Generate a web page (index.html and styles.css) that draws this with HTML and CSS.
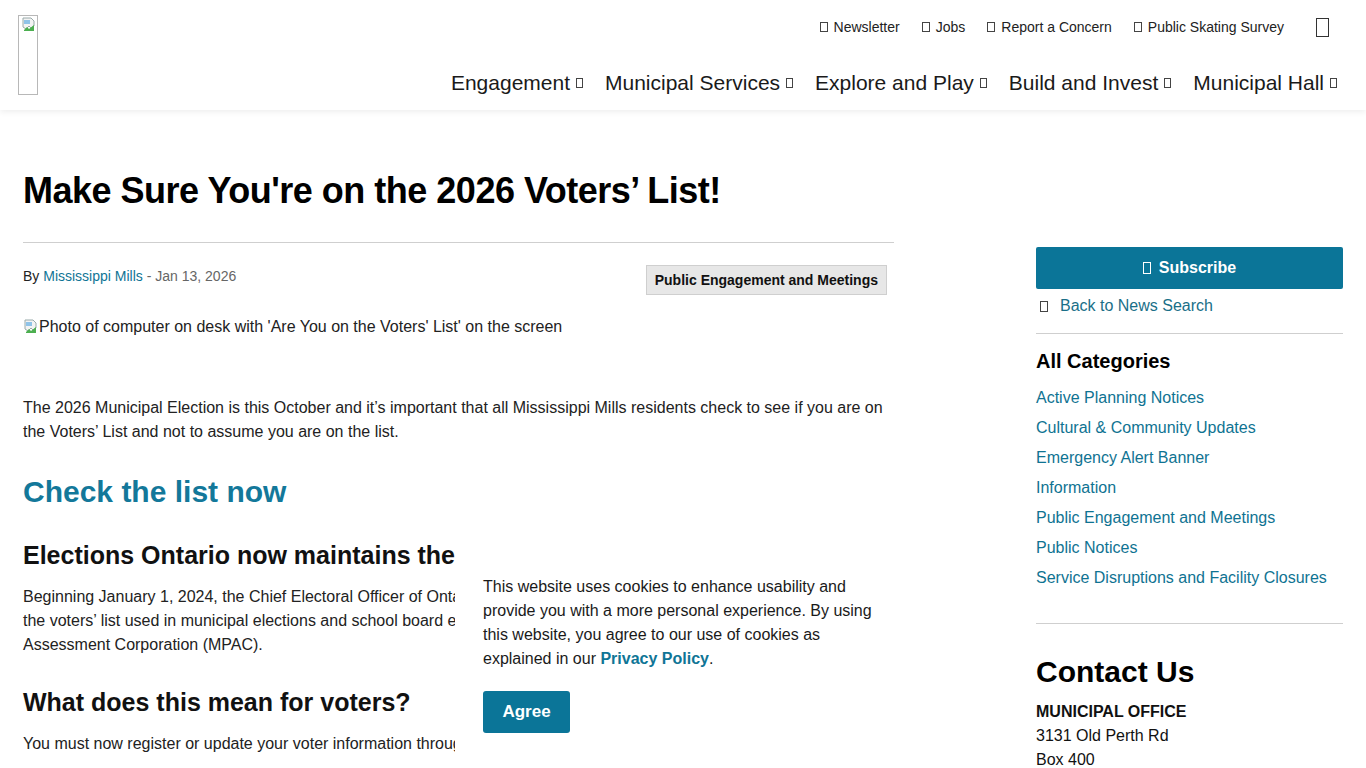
FILE: index.html
```html
<!DOCTYPE html>
<html lang="en">
<head>
<meta charset="utf-8">
<title>Make Sure You're on the 2026 Voters' List! - Mississippi Mills</title>
<link rel="stylesheet" href="styles.css">
</head>
<body>
<header class="site-header">
  <a class="logo" href="#">
    <svg class="broken" width="16" height="16" viewBox="0 0 16 16"><path d="M2 1h8l3 3v5l-3 2-2-2-3 3-3-2z" fill="#f3f3f3" stroke="#9aa" stroke-width="1"/><path d="M3 13l3-3 2 2 5-4v6H3z" fill="#4caf50"/><path d="M3 3h6v4H3z" fill="#8fc3e8"/></svg>
  </a>
  <div class="header-right">
    <nav class="util-nav">
      <a href="#"><span class="tofu"></span>Newsletter</a>
      <a href="#"><span class="tofu"></span>Jobs</a>
      <a href="#"><span class="tofu"></span>Report a Concern</a>
      <a href="#"><span class="tofu"></span>Public Skating Survey</a>
      <button class="search-btn" aria-label="Search"><span class="tofu big"></span></button>
    </nav>
    <nav class="main-nav">
      <a href="#">Engagement<span class="tofu"></span></a>
      <a href="#">Municipal Services<span class="tofu"></span></a>
      <a href="#">Explore and Play<span class="tofu"></span></a>
      <a href="#">Build and Invest<span class="tofu"></span></a>
      <a href="#">Municipal Hall<span class="tofu"></span></a>
    </nav>
  </div>
</header>

<main class="page">
  <h1 class="page-title">Make Sure You're on the 2026 Voters’ List!</h1>
  <div class="layout">
    <article class="article">
      <div class="meta">
        <p class="byline">By <a href="#">Mississippi Mills</a> <span class="date">- Jan 13, 2026</span></p>
        <a class="tag" href="#">Public Engagement and Meetings</a>
      </div>
      <p class="photo"><svg class="broken" width="16" height="16" viewBox="0 0 16 16"><path d="M2 1h8l3 3v5l-3 2-2-2-3 3-3-2z" fill="#f3f3f3" stroke="#9aa" stroke-width="1"/><path d="M3 13l3-3 2 2 5-4v6H3z" fill="#4caf50"/><path d="M3 3h6v4H3z" fill="#8fc3e8"/></svg>Photo of computer on desk with 'Are You on the Voters' List' on the screen</p>
      <p class="lead">The 2026 Municipal Election is this October and it’s important that all Mississippi Mills residents check to see if you are on the Voters’ List and not to assume you are on the list.</p>
      <h2 class="check"><a href="#">Check the list now</a></h2>
      <h3 class="h-first">Elections Ontario now maintains the voters’ list</h3>
      <p>Beginning January 1, 2024, the Chief Electoral Officer of Ontario (Elections Ontario) became responsible for maintaining the voters’ list used in municipal elections and school board elections, a role previously held by the Municipal Property Assessment Corporation (MPAC).</p>
      <h3 class="h-second">What does this mean for voters?</h3>
      <p>You must now register or update your voter information through Elections Ontario’s online service, Register to Vote.</p>
    </article>

    <aside class="sidebar">
      <a class="subscribe" href="#"><span class="tofu light"></span>Subscribe</a>
      <a class="back" href="#"><span class="tofu"></span>Back to News Search</a>
      <section class="cats">
        <h2>All Categories</h2>
        <ul>
          <li><a href="#">Active Planning Notices</a></li>
          <li><a href="#">Cultural &amp; Community Updates</a></li>
          <li><a href="#">Emergency Alert Banner</a></li>
          <li><a href="#">Information</a></li>
          <li><a href="#">Public Engagement and Meetings</a></li>
          <li><a href="#">Public Notices</a></li>
          <li><a href="#">Service Disruptions and Facility Closures</a></li>
        </ul>
      </section>
      <section class="contact">
        <h2>Contact Us</h2>
        <p><strong>MUNICIPAL OFFICE</strong><br>3131 Old Perth Rd<br>Box 400</p>
      </section>
    </aside>
  </div>
</main>

<div class="cookie">
  <p>This website uses cookies to enhance usability and provide you with a more personal experience. By using this website, you agree to our use of cookies as explained in our <a href="#">Privacy Policy</a>.</p>
  <button class="agree">Agree</button>
</div>
</body>
</html>
```

FILE: styles.css
```css
* { box-sizing: border-box; }
html, body { margin: 0; padding: 0; background: #fff; }
body {
  font-family: "Liberation Sans", Arial, sans-serif;
  color: #1a1a1a;
  font-size: 16px;
  line-height: 24px;
}
a { text-decoration: none; color: inherit; }

.tofu {
  display: inline-block;
  width: 8px;
  height: 11px;
  border: 1px solid #444;
  vertical-align: -1px;
}
.tofu.big { width: 13px; height: 19px; border-color: #333; }
.tofu.light { border-color: #fff; width: 8px; height: 12px; margin-right: 8px; vertical-align: -1px; }

/* header */
.site-header {
  display: flex;
  justify-content: space-between;
  height: 110px;
  padding: 15px 29px 0 18px;
  box-shadow: 0 2px 6px rgba(0,0,0,0.07);
  position: relative;
}
.logo {
  display: block;
  width: 20px;
  height: 80px;
  border: 1px solid #b8b8b8;
  padding: 1px 0 0 2px;
  line-height: 0;
}
.broken { display: inline-block; flex: none; }
.header-right {
  display: flex;
  flex-direction: column;
  align-items: flex-end;
}
.util-nav {
  display: flex;
  align-items: center;
  height: 24px;
  font-size: 14px;
  color: #222;
  margin-right: 8px;
}
.util-nav a { margin-left: 22px; display: flex; align-items: center; }
.util-nav a .tofu { margin-right: 6px; width: 8px; height: 10px; }
.search-btn {
  background: none;
  border: 0;
  padding: 0;
  margin-left: 32px;
  line-height: 0;
  cursor: pointer;
}
.main-nav {
  display: flex;
  margin-top: 31px;
  font-size: 21px;
  line-height: 26px;
  color: #1a1a1a;
}
.main-nav a { margin-left: 22px; display: flex; align-items: center; }
.main-nav a .tofu { margin-left: 6px; width: 7px; height: 10px; vertical-align: 0; }

/* page */
.page { padding: 0 23px; }
.page-title {
  margin: 59px 0 0;
  font-size: 36px;
  line-height: 44px;
  letter-spacing: -0.5px;
  font-weight: 700;
  color: #000;
}
.layout {
  display: grid;
  grid-template-columns: 871px 307px;
  justify-content: space-between;
  margin-top: 29px;
}
.article {
  border-top: 1px solid #cfcfcf;
}
.meta {
  display: flex;
  justify-content: space-between;
  align-items: flex-start;
  padding: 21px 7px 0 0;
}
.byline { margin: 0; font-size: 14px; line-height: 24px; color: #333; }
.byline a { color: #0f7596; }
.date { color: #666; }
.tag {
  display: inline-block;
  font-size: 14px;
  font-weight: 700;
  color: #111;
  background: #e7e7e7;
  border: 1px solid #cfcfcf;
  padding: 5px 8px;
  line-height: 18px;
  margin-top: 1px;
}
.photo {
  color: #222;
  display: flex;
  align-items: center;
}
.article p { color: #222; margin-bottom: 0; }
.article p.photo { margin-top: 20px; }
.article p.lead { margin-top: 57px; }
.check {
  margin: 30px 0 0;
  font-size: 30px;
  line-height: 36px;
}
.check a { color: #13789a; }
.article h3 {
  font-size: 25px;
  line-height: 30px;
  margin: 30px 0 0;
  color: #111;
}
.article h3.h-second { margin-top: 30px; }
.article h3 + p { margin-top: 15px; }

/* sidebar */
.sidebar { margin-top: 5px; }
.subscribe {
  display: flex;
  justify-content: center;
  align-items: center;
  height: 42px;
  background: #0b7598;
  color: #fff;
  font-weight: 700;
  font-size: 16px;
  border-radius: 2px;
}
.back {
  display: flex;
  align-items: center;
  color: #1a6f88;
  margin-top: 5px;
  padding-bottom: 15px;
  border-bottom: 1px solid #cfcfcf;
}
.back .tofu { margin: 0 12px 0 4px; width: 8px; height: 11px; border-color: #444; }
.cats {
  padding-bottom: 27px;
  border-bottom: 1px solid #cfcfcf;
}
.cats h2 {
  font-size: 20px;
  line-height: 24px;
  margin: 15px 0 0;
  color: #000;
}
.cats ul { list-style: none; margin: 13px 0 0; padding: 0; }
.cats li { line-height: 24px; margin-bottom: 6px; }
.cats li a { color: #0f7392; }
.contact h2 {
  font-size: 30px;
  line-height: 36px;
  margin: 30px 0 0;
  color: #000;
}
.contact p { margin: 10px 0 0; color: #111; }

/* cookie */
.cookie {
  position: fixed;
  left: 455px;
  top: 532px;
  width: 457px;
  height: 260px;
  background: #fff;
  padding: 43px 28px 0;
}
.cookie p { margin: 0; color: #1a1a1a; }
.cookie p a { color: #0f7596; font-weight: 700; }
.agree {
  margin-top: 20px;
  width: 87px;
  height: 42px;
  background: #0b7598;
  color: #fff;
  border: 0;
  border-radius: 3px;
  font-family: "Liberation Sans", Arial, sans-serif;
  font-weight: 700;
  font-size: 17px;
}
```
